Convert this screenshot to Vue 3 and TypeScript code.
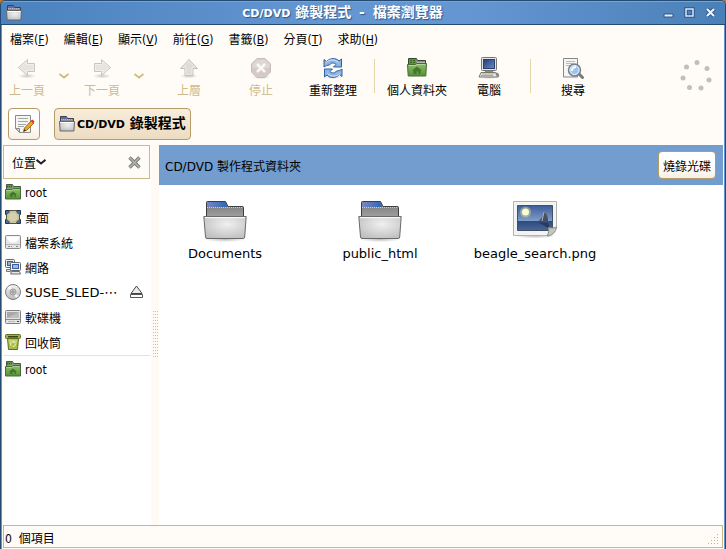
<script setup lang="ts">
import { ref } from 'vue'

interface MenuEntry { label: string; key: string }
interface Tool { id: string; label: string; icon: string; disabled?: boolean; history?: boolean; divider?: boolean }
interface Place { label: string; icon: string; latin?: string; eject?: boolean }
interface FileEntry { name: string; icon: string }

const menus: MenuEntry[] = [
  { label: '檔案', key: 'F' },
  { label: '編輯', key: 'E' },
  { label: '顯示', key: 'V' },
  { label: '前往', key: 'G' },
  { label: '書籤', key: 'B' },
  { label: '分頁', key: 'T' },
  { label: '求助', key: 'H' },
]

const tools: Tool[] = [
  { id: 'back', label: '上一頁', icon: 'i-back', disabled: true, history: true },
  { id: 'forward', label: '下一頁', icon: 'i-forward', disabled: true, history: true },
  { id: 'up', label: '上層', icon: 'i-up', disabled: true },
  { id: 'stop', label: '停止', icon: 'i-stop', disabled: true },
  { id: 'reload', label: '重新整理', icon: 'i-reload' },
  { id: 'home', label: '個人資料夾', icon: 'i-home', divider: true },
  { id: 'computer', label: '電腦', icon: 'i-computer' },
  { id: 'search', label: '搜尋', icon: 'i-search', divider: true },
]

const places: Place[] = [
  { label: 'root', icon: 'i-home-small', latin: 'narrow' },
  { label: '桌面', icon: 'i-desktop' },
  { label: '檔案系統', icon: 'i-drive' },
  { label: '網路', icon: 'i-network' },
  { label: 'SUSE_SLED-⋯', icon: 'i-disc', latin: 'wide', eject: true },
  { label: '軟碟機', icon: 'i-floppy' },
  { label: '回收筒', icon: 'i-trash' },
]
const bookmarks: Place[] = [{ label: 'root', icon: 'i-home-small', latin: 'narrow' }]

const files: FileEntry[] = [
  { name: 'Documents', icon: 'i-folder' },
  { name: 'public_html', icon: 'i-folder' },
  { name: 'beagle_search.png', icon: 'i-picture' },
]

const sidebarOpen = ref(true)
const selected = ref('')
</script>

<template>
  <svg class="defs" aria-hidden="true">
    <defs>
      <linearGradient id="g-silver" x1="0" y1="0" x2="0" y2="1">
        <stop offset="0" stop-color="#f4f4f4" /><stop offset="1" stop-color="#b9bab8" />
      </linearGradient>
      <radialGradient id="g-front" cx=".55" cy=".35" r=".8">
        <stop offset="0" stop-color="#f0f0f0" /><stop offset="1" stop-color="#b8b8b8" />
      </radialGradient>
      <linearGradient id="g-green" x1="0" y1="0" x2="0" y2="1">
        <stop offset="0" stop-color="#8fbf68" /><stop offset="1" stop-color="#559038" />
      </linearGradient>
      <linearGradient id="g-tab" x1="0" y1="0" x2="1" y2="0">
        <stop offset="0" stop-color="#7b86c2" /><stop offset="1" stop-color="#2b66b4" />
      </linearGradient>
      <linearGradient id="g-back" x1="0" y1="0" x2="0" y2="1">
        <stop offset="0" stop-color="#777" /><stop offset="1" stop-color="#a8a8a8" />
      </linearGradient>
      <linearGradient id="g-night" x1="0" y1="0" x2="0" y2="1">
        <stop offset="0" stop-color="#3c5c98" /><stop offset=".6" stop-color="#7d9cc9" />
        <stop offset=".62" stop-color="#2d4a7f" /><stop offset="1" stop-color="#4a6797" />
      </linearGradient>
      <linearGradient id="g-screen" x1="0" y1="0" x2="1" y2="1">
        <stop offset="0" stop-color="#1d3e7c" /><stop offset="1" stop-color="#7289bb" />
      </linearGradient>
      <radialGradient id="g-shade">
        <stop offset="0" stop-color="#000" stop-opacity=".25" /><stop offset="1" stop-color="#000" stop-opacity="0" />
      </radialGradient>
    </defs>

    <symbol id="i-back" viewBox="0 0 22 22">
      <ellipse cx="11" cy="19" rx="9" ry="2.5" fill="url(#g-shade)" />
      <path d="M2.500 10.500 11.500 2.500v4h7v8h-7v4z" fill="#dfdfdc" stroke="#b9b8b4" stroke-linejoin="round" />
      <path d="M4 10.500 10.500 4.700v2.800h7v6h-7v2.800z" fill="none" stroke="#ecece9" />
    </symbol>
    <symbol id="i-forward" viewBox="0 0 22 22">
      <ellipse cx="11" cy="19" rx="9" ry="2.5" fill="url(#g-shade)" />
      <path d="M19.500 10.500 10.500 2.500v4h-7v8h7v4z" fill="#dfdfdc" stroke="#b9b8b4" stroke-linejoin="round" />
      <path d="M18 10.500 11.500 4.700v2.800h-7v6h7v2.800z" fill="none" stroke="#ecece9" />
    </symbol>
    <symbol id="i-up" viewBox="0 0 22 22">
      <ellipse cx="11" cy="19" rx="9" ry="2.5" fill="url(#g-shade)" />
      <path d="M11 2.500 19.500 11.500h-4.500v7H7v-7H2.500z" fill="#d6d5d1" stroke="#b3b1ad" stroke-linejoin="round" />
      <path d="M11 4 17 10.500h-3v7H8v-7H5z" fill="none" stroke="#e6e6e2" />
    </symbol>
    <symbol id="i-stop" viewBox="0 0 22 22">
      <ellipse cx="11" cy="20" rx="9" ry="2" fill="url(#g-shade)" />
      <path d="M7 1.500h8l5.500 5.500v8L15 20.500H7L1.500 15V7z" fill="#cbbebc" stroke="#b8adaa" />
      <path d="M7.500 2.500h7l5 5v3.500H2.500V7.500z" fill="#d8cecc" />
      <path d="m7 7 8 8m0-8-8 8" stroke="#fbf9f7" stroke-width="2.500" />
    </symbol>
    <symbol id="i-reload" viewBox="0 0 22 22">
      <ellipse cx="11" cy="20" rx="8" ry="2" fill="url(#g-shade)" />
      <path d="M2 10V2.500l2.500 2C8 .8 14 .6 17 4l2.500-2V10h-8L14 7.500C12 5.500 9 5.500 7.500 8 5.500 8 3.500 9 2 10z" fill="#8fb4df" stroke="#2b62a8" />
      <path d="M20 12v7.500l-2.500-2C14 21.200 8 21.400 5 18l-2.500 2V12h8L8 14.500c2 2 5 2 6.500-.5 2 0 4-1 5.500-2z" fill="#8fb4df" stroke="#2b62a8" />
      <path d="M4 5.500C8 2 13 2 16.500 5.500M18 16.500C14 20 9 20 5.500 16.500" fill="none" stroke="#deebf8" />
    </symbol>
    <symbol id="i-home" viewBox="0 0 22 22">
      <path d="M2.500 9V1.500h8l1 2h8V9z" fill="#8a9486" stroke="#374a31" />
      <path d="M3 2h7v5H3z" fill="#5d9440" />
      <path d="M4 3.500h6M4 5.500h6" stroke="#3d6b27" stroke-dasharray="2 1" />
      <path d="M11 5.500h8" stroke="#b5bab3" />
      <path d="M1.500 7.500h8l1-1h10l-.7 12.500H2.200z" fill="url(#g-green)" stroke="#456d32" />
      <path d="M2.800 8.500h7l1-1h8.500" fill="none" stroke="#b3d69b" />
      <path d="m11 9.500 5 4h-1.500V17h-2v-2.500h-2V17h-3v-3.500H6z" fill="#43772c" />
    </symbol>
    <symbol id="i-home-small" viewBox="0 0 16 16">
      <path d="M1.500 6V.500h6l1 2h7V6z" fill="#8d9a88" stroke="#45573e" />
      <path d="M2 1h5v3H2z" fill="#5d9440" />
      <path d="M2 2.500h5" stroke="#34591f" stroke-dasharray="1 1" />
      <path d="M.500 5.500H7l1-1h7.500v10.500H.500z" fill="url(#g-green)" stroke="#456d32" />
      <path d="M1.500 6.500H7l1-1h6.500" fill="none" stroke="#a9cf90" />
      <path d="m8 7.500 4 3h-1V13H9.500v-2h-2v2H5v-2.500H4z" fill="#43772c" />
    </symbol>
    <symbol id="i-computer" viewBox="0 0 22 22">
      <ellipse cx="11" cy="20" rx="10" ry="2" fill="url(#g-shade)" />
      <rect x="3.500" y=".5" width="15" height="13" rx="1" fill="#e3e4df" stroke="#777970" />
      <rect x="5.500" y="2.500" width="11" height="9" fill="url(#g-screen)" stroke="#294175" />
      <path d="M7 14h8l1 2H6z" fill="#8c8e86" />
      <path d="M3 15.500h14.500l2 4.500H1z" fill="#e9e9e4" stroke="#777970" />
      <path d="M4 17h12M3 18.500h12" stroke="#aaa99f" />
      <path d="M18 16.500c3 0 2 3 2.500 3.500" fill="none" stroke="#888" stroke-width="2" />
    </symbol>
    <symbol id="i-search" viewBox="0 0 22 22">
      <path d="M1.500 1.500h14V20H1.500z" fill="#f6f7f5" stroke="#858782" />
      <path d="M4 4.500h9M4 6.500h7M4 8.500h5" stroke="#b9bab7" />
      <path d="m17 17 3.500 3.500" stroke="#777a77" stroke-width="3" stroke-linecap="round" />
      <circle cx="12.500" cy="13" r="6" fill="#a8caef" stroke="#777d82" stroke-width="1.500" />
      <circle cx="12.500" cy="13" r="4.500" fill="#9fc1ec" stroke="#e7f0fa" />
      <path d="M10 14c0-3 2-4 4-4" fill="none" stroke="#f7fbff" stroke-width="2" />
    </symbol>
    <symbol id="i-desktop" viewBox="0 0 16 16">
      <path d="M.500 1.500h4v4h-4zM11.500 1.500h4v4h-4zM.500 10.500h4v4h-4zM11.500 10.500h4v4h-4z" fill="#4a6c9c" stroke="#1f3554" />
      <path d="M4.500 1.500h7c0 2 1 3 3 3.500v6c-2 .5-3 1.500-3 3.500h-7c0-2-1-3-3-3.500V5c2-.5 3-1.500 3-3.500z" fill="#c9c59f" stroke="#55543f" />
      <circle cx="8" cy="8" r="4" fill="#d6d2b0" />
    </symbol>
    <symbol id="i-drive" viewBox="0 0 16 16">
      <rect x=".5" y="1.500" width="15" height="13" rx="1" fill="#e6e6e6" stroke="#8c8c8c" />
      <path d="M2 2.500c0 4 3 6 6 6s6-2 6-6z" fill="#fff" />
      <path d="M1 10.500h14" stroke="#b4b4b4" />
      <path d="M3 12.500h2m1 0h1m4 0h2" stroke="#8a8a8a" />
    </symbol>
    <symbol id="i-network" viewBox="0 0 16 16">
      <rect x=".5" y=".5" width="9" height="8" rx="1" fill="#f0f1ef" stroke="#60666a" />
      <rect x="2.500" y="2.500" width="5" height="4" fill="#8fb0de" stroke="#3a5f9a" />
      <path d="M1.500 10.500h4v2h-4z" fill="#e4e4e0" stroke="#777" />
      <rect x="5.500" y="3.500" width="10" height="8" rx="1" fill="#f3f4f2" stroke="#60666a" />
      <rect x="7.500" y="5.500" width="6" height="4" fill="#9ab9e4" stroke="#3a5f9a" />
      <path d="M6.500 12.500h8l1 2.500h-10z" fill="#e6e6e2" stroke="#6f716c" />
    </symbol>
    <symbol id="i-disc" viewBox="0 0 16 16">
      <circle cx="8" cy="8" r="7.500" fill="url(#g-silver)" stroke="#7c7c7c" />
      <path d="M8 8 2.500 4 5 2zM8 8l5.500 4-2.500 2z" fill="#fff" opacity=".8" />
      <circle cx="8" cy="8" r="3" fill="#d4d4d4" stroke="#999" />
      <circle cx="8" cy="8" r="1.200" fill="#fff" stroke="#777" />
    </symbol>
    <symbol id="i-floppy" viewBox="0 0 16 16">
      <rect x=".5" y="1.500" width="15" height="13" rx="1" fill="#e4e4e4" stroke="#808080" />
      <path d="M2 3h12v6H2z" fill="#a8a8a8" />
      <path d="M2 9 14 3v6z" fill="#bdbdbd" />
      <path d="M1 10.500h14" stroke="#8b8b8b" />
      <path d="M3 12.500h7" stroke="#bbb" />
      <path d="M12 12.500h2" stroke="#4b4b4b" />
    </symbol>
    <symbol id="i-trash" viewBox="0 0 16 16">
      <path d="M2.500 4.500h11l-1 11h-9z" fill="#a8bd45" stroke="#5f6f20" />
      <path d="M3.500 5.500h9l-.5 4H4z" fill="#c3d26c" />
      <rect x=".5" y=".5" width="15" height="4" rx="1" fill="#a0b244" stroke="#5f6f20" />
      <path d="M3 2h10v1.500H3z" fill="#394411" />
      <circle cx="8" cy="10" r="2.500" fill="none" stroke="#eef3d0" stroke-dasharray="4 1.200" />
    </symbol>
    <symbol id="i-folder" viewBox="0 0 44 42">
      <ellipse cx="22" cy="39.500" rx="21" ry="2.500" fill="url(#g-shade)" />
      <path d="M3.500 20V2.500q0-1 1-1h18l2.500 5h14.500q1 0 1 1V20z" fill="url(#g-back)" stroke="#3b3d40" />
      <path d="M4 7V2h18l2.200 5z" fill="url(#g-tab)" />
      <path d="M4 7.500h36" stroke="#c8cbd6" stroke-dasharray="1 1" />
      <path d="M.8 16.500h42.400l-1.500 20.500q-.1 1.500-1.500 1.500H4q-1.400 0-1.500-1.500z" fill="url(#g-front)" stroke="#6a6a6a" />
      <path d="M2 17.700h40" stroke="#fff" />
    </symbol>
    <symbol id="i-folder-small" viewBox="0 0 16 16">
      <path d="M1.500 8V.500h6l1 2h6v5z" fill="#8e8e92" stroke="#3e4046" />
      <path d="M2 1h5.500l1 2H2z" fill="#5c6cb4" />
      <path d="M2 3.500h12" stroke="#b9bcc8" stroke-dasharray="1 1" />
      <path d="M.500 5.500h15l-.6 9.500H1.100z" fill="url(#g-front)" stroke="#686868" />
      <path d="M1.500 6.500h13" stroke="#fff" />
    </symbol>
    <symbol id="i-picture" viewBox="0 0 44 42">
      <ellipse cx="22" cy="36" rx="21" ry="2.500" fill="url(#g-shade)" />
      <path d="M.500 1.500h43V28l-8 7.500H.500z" fill="#f3f3f1" stroke="#b2b2b0" />
      <path d="M4.500 5.500h35v25h-35z" fill="url(#g-night)" stroke="#3f4f67" />
      <circle cx="12.500" cy="12" r="5.500" fill="#dce482" opacity=".45" />
      <circle cx="12.500" cy="12" r="3.500" fill="#fafad5" />
      <path d="M24.500 22c4-3 6-7 7-10 3 3 4 7 3.500 10z" fill="#4b4f59" />
      <path d="M31 12 29 21" stroke="#a3b0c6" />
      <path d="m25 22 10 1 2 6z" fill="#2a385b" />
      <path d="M43.500 27c-3 1.500-6 1-8 .5.500 3 .500 5.500-1.500 8.500 5 0 9-4 9.500-9z" fill="#c5c6c2" stroke="#888a85" />
    </symbol>
  </svg>

  <div class="window">
    <header class="titlebar">
      <svg class="title-icon"><use href="#i-folder-small" /></svg>
      <h1 class="title"><span class="caps">CD/DVD</span> 錄製程式 <span class="dash">-</span> 檔案瀏覽器</h1>
      <div class="controls">
        <button type="button" aria-label="最小化">
          <svg viewBox="0 0 11 11"><path d="M1 7h9v3H1z" fill="#eaf1fa" stroke="#2e568b" /></svg>
        </button>
        <button type="button" aria-label="最大化">
          <svg viewBox="0 0 11 11"><path d="M2 2h7v7H2z" fill="none" stroke="#2e568b" stroke-width="3.500" /><path d="M2 2h7v7H2z" fill="none" stroke="#dce8f6" stroke-width="1.500" /></svg>
        </button>
        <button type="button" aria-label="關閉">
          <svg viewBox="0 0 11 11"><path d="m2 2 7 7m0-7-7 7" stroke="#2e568b" stroke-width="4" /><path d="m2 2 7 7m0-7-7 7" stroke="#edf3fb" stroke-width="2.200" /></svg>
        </button>
      </div>
    </header>

    <div class="body">
      <nav class="menubar">
        <button v-for="m in menus" :key="m.key" type="button">{{ m.label }}(<u>{{ m.key }}</u>)</button>
      </nav>

      <div class="toolbar">
        <template v-for="t in tools" :key="t.id">
          <span v-if="t.divider" class="divider"></span>
          <button type="button" class="tool" :class="{ compact: t.history }" :disabled="t.disabled">
            <svg><use :href="'#' + t.icon" /></svg>
            <span>{{ t.label }}</span>
          </button>
          <button v-if="t.history" type="button" class="history" disabled :aria-label="t.label">
            <svg viewBox="0 0 10 6"><path d="M.500 1 5 4.500 9.500 1" fill="none" stroke="#cdbb82" stroke-width="1.800" /></svg>
          </button>
        </template>
        <svg class="throbber" viewBox="0 0 34 34" aria-hidden="true">
          <g fill="#bfc0be">
            <circle cx="17" cy="3.500" r="2.500" /><circle cx="27" cy="9.500" r="2.500" />
            <circle cx="29" cy="21" r="2.500" /><circle cx="21" cy="29" r="2.500" />
            <circle cx="9.500" cy="28.500" r="2.500" /><circle cx="3" cy="19" r="2.500" />
            <circle cx="6.500" cy="8" r="2.500" />
          </g>
        </svg>
      </div>

      <div class="location">
        <button type="button" class="framed edit" aria-label="編輯位置">
          <svg viewBox="0 0 22 22">
            <path d="M2.500 2.500h15v17h-11l-4-4z" fill="#f4f4f2" stroke="#8a8c87" />
            <path d="M5 5.500h10M5 8.500h10M5 11.500h8M5 13.500h6" stroke="#a6a8a3" />
            <path d="m2.500 15.500 4 0 0 4z" fill="#d0d1ce" stroke="#8a8c87" />
            <path d="m10.500 18.500 1-3.500 7-7.500 2.500 2.500-7 7z" fill="#f6a11f" stroke="#8d5b12" stroke-width=".8" />
            <path d="m18 8 1.500-1.500 2 2L20 10.500z" fill="#dd3a22" />
            <path d="m10.500 18.500.8-2.500 1.700 1.700z" fill="#333" />
          </svg>
        </button>
        <button type="button" class="framed crumb">
          <svg><use href="#i-folder-small" /></svg>
          <span><span class="caps">CD/DVD</span> 錄製程式</span>
        </button>
      </div>

      <div class="panes">
        <aside v-if="sidebarOpen" class="sidebar">
          <div class="side-head">
            <button type="button" class="side-pick">
              <span>位置</span><svg viewBox="0 0 10 6"><path d="M.500 .8 5 4.500 9.500 .8" fill="none" stroke="#222" stroke-width="2" /></svg>
            </button>
            <button type="button" class="side-close" aria-label="關閉側邊欄" @click="sidebarOpen = false">
              <svg viewBox="0 0 13 13"><path d="m1.500 1.500 10 10m0-10-10 10" stroke="#767873" stroke-width="3.400" /><path d="m1.500 1.500 10 10m0-10-10 10" stroke="#b3b4b0" stroke-width="1.600" /></svg>
            </button>
          </div>
          <ul class="places">
            <li v-for="p in places" :key="p.label">
              <a href="#" @click.prevent>
                <svg class="place-icon"><use :href="'#' + p.icon" /></svg>
                <span :class="p.latin || 'han'">{{ p.label }}</span>
              </a>
              <button v-if="p.eject" type="button" class="eject" aria-label="退出">
                <svg viewBox="0 0 13 13"><path d="M6.500 1 12 8.500H1z" fill="#ececec" stroke="#444" /><path d="M.500 9.500h12v3H.500z" fill="#fff" stroke="#555" /></svg>
              </button>
            </li>
          </ul>
          <ul class="places bookmarks">
            <li v-for="p in bookmarks" :key="p.label">
              <a href="#" @click.prevent>
                <svg class="place-icon"><use :href="'#' + p.icon" /></svg>
                <span :class="p.latin">{{ p.label }}</span>
              </a>
            </li>
          </ul>
        </aside>
        <div class="grip"><span></span></div>
        <main class="content">
          <div class="banner">
            <span class="caption">CD/DVD 製作程式資料夾</span>
            <button type="button" class="framed burn">燒錄光碟</button>
          </div>
          <div class="files">
            <button
              v-for="f in files" :key="f.name" type="button" class="file"
              :class="{ picked: selected === f.name }" @click="selected = f.name"
            >
              <svg><use :href="'#' + f.icon" /></svg>
              <span>{{ f.name }}</span>
            </button>
          </div>
        </main>
      </div>

      <footer class="status">
        <span class="caption">0&nbsp; 個項目</span>
        <svg class="resize" viewBox="0 0 11 11" aria-hidden="true">
          <path d="M9 0h1v1H9zM6 3h1v1H6zM9 3h1v1H9zM3 6h1v1H3zM6 6h1v1H6zM9 6h1v1H9zM0 9h1v1H0zM3 9h1v1H3zM6 9h1v1H6zM9 9h1v1H9z" fill="#cdb67c" />
        </svg>
      </footer>
    </div>
  </div>
</template>

<style>
body {
  background: #c9782a;
}
</style>

<style scoped>
.defs {
  position: absolute;
  width: 0;
  height: 0;
}
.window {
  display: flex;
  flex-direction: column;
  box-sizing: border-box;
  min-height: 100vh;
  border: 1px solid #234b73;
  border-bottom: 0;
  border-radius: 5px 5px 0 0;
  overflow: hidden;
  background: #5f95cf;
  color: #000;
  font: 12px/16px "DejaVu Sans Condensed", "DejaVu Sans", "Noto Sans CJK TC", sans-serif;
}
button {
  margin: 0;
  padding: 0;
  border: 0;
  background: none;
  color: inherit;
  font: inherit;
}
svg {
  display: block;
  flex: none;
}
.titlebar {
  display: flex;
  align-items: center;
  height: 23px;
  border-bottom: 1px solid #244a70;
  box-shadow: inset 0 1px #78a4d4;
  background: linear-gradient(90deg, #4a82bd, #6496d2 45%, #6496d2 65%, #4a80b8);
  color: #fff;
}
.title-icon {
  width: 16px;
  height: 16px;
  margin-left: 5px;
}
.title {
  flex: 1;
  margin: 0;
  text-align: center;
  font: bold 14px/20px "DejaVu Sans", "Noto Sans CJK TC", sans-serif;
  text-shadow: 1px 1px 1px #30588c;
}
.caps {
  font-size: 11px;
}
.dash {
  margin: 0 3px;
}
.controls {
  display: flex;
  gap: 10px;
  margin-right: 9px;
}
.controls svg {
  width: 11px;
  height: 11px;
}
.body {
  flex: 1;
  display: flex;
  flex-direction: column;
  margin: 0 1px;
  padding: 0 1px 1px;
  background: #fffcf7;
}
.menubar {
  display: flex;
  gap: 15px;
  padding: 7px;
}
.toolbar {
  display: flex;
  height: 48px;
}
.tool {
  display: flex;
  flex-direction: column;
  align-items: center;
  gap: 4px;
  width: 72px;
  padding-top: 2px;
}
.tool.compact {
  width: 48px;
}
.tool svg {
  width: 22px;
  height: 22px;
}
.tool:disabled {
  color: #cdbb8c;
}
.tool:disabled svg {
  opacity: .8;
}
.history {
  display: flex;
  justify-content: center;
  align-items: center;
  width: 26px;
  height: 42px;
  margin-right: 1px;
}
.history svg {
  width: 10px;
  height: 6px;
}
.divider {
  width: 1px;
  height: 34px;
  margin: 4px 6px 0 5px;
  background: #e6d5aa;
}
.throbber {
  width: 34px;
  height: 34px;
  margin: 4px 9px 0 auto;
}
.location {
  display: flex;
  gap: 14px;
  padding: 5px;
}
.framed {
  display: flex;
  align-items: center;
  border: 1px solid #b39c68;
  border-radius: 4px;
  background: linear-gradient(#fff, #fff 50%, #f8efe3);
}
.edit {
  justify-content: center;
  width: 32px;
  height: 32px;
}
.edit svg {
  width: 22px;
  height: 22px;
}
.crumb {
  gap: 2px;
  padding: 0 4px;
  background: linear-gradient(#f7eddb, #ecdcc1);
  font: bold 14px/20px "DejaVu Sans", "Noto Sans CJK TC", sans-serif;
}
.crumb svg {
  width: 16px;
  height: 16px;
}
.panes {
  flex: 1;
  display: flex;
}
.sidebar {
  width: 148px;
  background: #fff;
}
.side-head {
  display: flex;
  align-items: center;
  justify-content: space-between;
  height: 32px;
  padding: 0 8px;
  margin-right: 1px;
  border: 1px solid #cdb88a;
  background: #fffcf7;
}
.side-pick {
  display: flex;
  align-items: center;
}
.side-pick span {
  padding-top: 4px;
}
.side-pick svg {
  width: 10px;
  height: 6px;
}
.side-close svg {
  width: 13px;
  height: 13px;
}
.places {
  margin: 0;
  padding: 1px 0 0;
  list-style: none;
}
.bookmarks {
  margin: 0 1px;
  border-top: 1px solid #ece2ca;
}
.bookmarks a {
  margin-left: -1px;
}
.places li {
  display: flex;
  align-items: center;
  height: 25px;
}
.places a {
  display: flex;
  align-items: center;
  gap: 4px;
  color: inherit;
  text-decoration: none;
}
.place-icon {
  width: 16px;
  height: 16px;
  margin: 0 0 2px 2px;
}
.han {
  padding-top: 2px;
}
.wide {
  font: 13px/16px "DejaVu Sans", "Noto Sans CJK TC", sans-serif;
}
.eject {
  margin: 0 8px 2px auto;
}
.eject svg {
  width: 13px;
  height: 13px;
}
.grip {
  display: flex;
  align-items: center;
  justify-content: center;
  width: 8px;
  background: #fffaf4;
}
.grip span {
  width: 6px;
  height: 48px;
  background: conic-gradient(#d8c48f 25%, transparent 0) 0 0 / 2px 3px;
}
.content {
  flex: 1;
  background: #fff;
}
.banner {
  display: flex;
  align-items: center;
  justify-content: space-between;
  height: 40px;
  padding: 0 7px 0 6px;
  background: #739dcf;
  font-family: "DejaVu Sans", "Noto Sans CJK TC", sans-serif;
}
.caption {
  padding-top: 4px;
}
.burn {
  height: 28px;
  padding: 4px 4px 0;
}
.files {
  display: grid;
  grid-template-columns: repeat(auto-fill, 132px);
  gap: 23px;
  padding-top: 15px;
}
.file {
  display: flex;
  flex-direction: column;
  align-items: center;
  gap: 4px;
  font: 13px/16px "DejaVu Sans", "Noto Sans CJK TC", sans-serif;
}
.file svg {
  width: 44px;
  height: 42px;
}
.picked span {
  background: #c9dbf0;
}
.status {
  display: flex;
  align-items: center;
  justify-content: space-between;
  height: 21px;
  padding: 0 1px;
  border: 1px solid #cdb67f;
}
.resize {
  align-self: flex-end;
  width: 11px;
  height: 11px;
  margin: 0 2px 2px 0;
}
</style>
